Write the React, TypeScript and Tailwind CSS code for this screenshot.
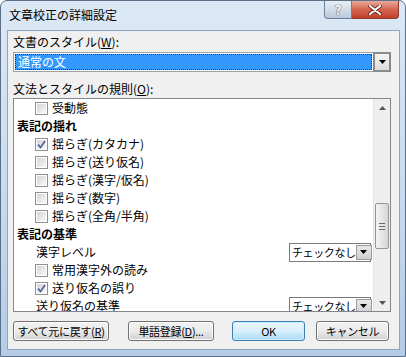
import React from "react"

type Row =
  | { kind: "check"; label: string; checked?: boolean }
  | { kind: "head"; label: string }
  | { kind: "select"; label: string; value: string }

const rows: Row[] = [
  { kind: "check", label: "受動態" },
  { kind: "head", label: "表記の揺れ" },
  { kind: "check", label: "揺らぎ(カタカナ)", checked: true },
  { kind: "check", label: "揺らぎ(送り仮名)" },
  { kind: "check", label: "揺らぎ(漢字/仮名)" },
  { kind: "check", label: "揺らぎ(数字)" },
  { kind: "check", label: "揺らぎ(全角/半角)" },
  { kind: "head", label: "表記の基準" },
  { kind: "select", label: "漢字レベル", value: "チェックなし" },
  { kind: "check", label: "常用漢字外の読み" },
  { kind: "check", label: "送り仮名の誤り", checked: true },
  { kind: "select", label: "送り仮名の基準", value: "チェックなし" },
]

function CheckBox({ checked }: { checked?: boolean }) {
  return (
    <div className="w-[13px] h-[13px] border border-[#8e8f8f] bg-white flex items-center justify-center shrink-0">
      <div className="w-[9px] h-[9px] bg-gradient-to-br from-[#d4d4d4] to-[#f8f8f8] flex items-center justify-center">
        {checked && (
          <svg width="9" height="9" viewBox="0 0 9 9">
            <path d="M1 4.5 L3.5 7.5 L8 1" fill="none" stroke="#4a5f97" strokeWidth="1.6" />
          </svg>
        )}
      </div>
    </div>
  )
}

function DropArrow() {
  return (
    <svg width="7" height="4" viewBox="0 0 7 4">
      <path d="M0 0 H7 L3.5 4 Z" fill="#000" />
    </svg>
  )
}

function Button({ children, width, primary }: { children: React.ReactNode; width: string; primary?: boolean }) {
  return (
    <div
      className={`${width} h-[20px] rounded-[3px] border flex items-center justify-center whitespace-nowrap tracking-[-0.3px] text-[11px] leading-none text-black ${
        primary
          ? "border-[#3c7fb1] bg-gradient-to-b from-[#eaf6fd] via-[#d9f0fc] to-[#a7d9f5] shadow-[inset_0_0_0_1px_#cdeefc]"
          : "border-[#707070] bg-gradient-to-b from-[#f2f2f2] via-[#ebebeb] to-[#d0d0d0] shadow-[inset_0_0_0_1px_#fcfcfc]"
      }`}
    >
      {children}
    </div>
  )
}

export default function App() {
  return (
    <div className="w-[406px] h-[357px] overflow-hidden bg-white font-['Noto_Sans_CJK_JP','Noto_Sans',sans-serif]">
      <div className="w-[406px] h-[357px] flex flex-col rounded-t-[7px] border border-[#5b6f88] bg-gradient-to-b from-[#dce8f5] via-[#c9dcf0] to-[#b4cce6]">
        {/* Title bar */}
        <div className="h-[29px] flex justify-between">
          <div className="pl-[8px] pt-[6px] text-[12px] leading-[16px] text-black">文章校正の詳細設定</div>
          <div className="flex mr-[6px]">
            <div className="w-[28px] h-[18px] rounded-bl-[4px] border border-[#6d7f99] border-t-0 bg-gradient-to-b from-[#e6edf5] via-[#d2dde9] to-[#b9c9dc] flex items-center justify-center text-[13px] font-bold leading-none text-white [text-shadow:0_0_1px_#444,0_0_1px_#444]">
              ?
            </div>
            <div className="w-[47px] h-[18px] rounded-br-[4px] border border-[#8b3a2e] border-t-0 border-l-0 bg-gradient-to-b from-[#e9a99c] via-[#d4644f] to-[#c0402b] flex items-center justify-center">
              <svg width="14" height="10" viewBox="0 0 14 10">
                <path d="M2 1 L12 9 M12 1 L2 9" stroke="#5a1d12" strokeWidth="3.6" strokeLinecap="round" />
                <path d="M2 1 L12 9 M12 1 L2 9" stroke="#fff" strokeWidth="2.2" strokeLinecap="round" />
              </svg>
            </div>
          </div>
        </div>

        {/* Client area */}
        <div className="ml-[6px] mr-[5px] h-[320px] border border-[#8fa6c2] bg-[#f0f0f0] pl-[5px] flex flex-col text-[12px] text-black whitespace-nowrap">
          <div className="mt-[3px] leading-[16px]">
            文書のスタイル(<span className="underline">W</span>):
          </div>
          <div className="mt-[2px] w-[378px] h-[20px] border border-[#a0a0a0] bg-white flex items-stretch">
            <div className="flex-1 p-[1px]">
              <div className="h-full bg-[#3399ff] border border-dotted border-[#4b3200] pl-[2px] flex items-center text-white leading-none">
                通常の文
              </div>
            </div>
            <div className="w-[18px] -my-[1px] -mr-[1px] border-2 border-[#8a8a8a] bg-gradient-to-b from-[#f4f4f4] to-[#dcdcdc] flex items-center justify-center">
              <DropArrow />
            </div>
          </div>

          <div className="mt-[9px] leading-[16px]">
            文法とスタイルの規則(<span className="underline">O</span>):
          </div>
          <div className="mt-[1px] w-[378px] h-[214px] border border-[#828790] bg-white flex">
            <div className="flex-1 overflow-hidden">
              {rows.map((r, i) => {
                if (r.kind === "head")
                  return (
                    <div key={i} className="h-[18px] pl-[3px] flex items-center font-bold leading-none">
                      {r.label}
                    </div>
                  )
                if (r.kind === "check")
                  return (
                    <div key={i} className="h-[18px] pl-[21px] flex items-center gap-[4px] leading-none">
                      <CheckBox checked={r.checked} />
                      <span>{r.label}</span>
                    </div>
                  )
                return (
                  <div key={i} className="h-[18px] pl-[22px] pr-[2px] flex items-center justify-between leading-none">
                    <span>{r.label}</span>
                    <div className="w-[82px] h-[19px] border border-[#7a7a7a] bg-white flex items-center">
                      <span className="flex-1 pl-[2px] text-[11px] tracking-[-0.4px]">{r.value}</span>
                      <div className="w-[16px] h-[15px] mr-[1px] shrink-0 bg-gradient-to-b from-[#e8e8e8] to-[#cfcfcf] border border-[#9a9a9a] flex items-center justify-center">
                        <DropArrow />
                      </div>
                    </div>
                  </div>
                )
              })}
            </div>
            {/* Scrollbar */}
            <div className="w-[17px] bg-[#eeeeee] border-l border-[#e4e4e4] flex flex-col items-center">
              <div className="h-[17px] flex items-center justify-center">
                <svg width="7" height="4" viewBox="0 0 7 4">
                  <path d="M0 4 H7 L3.5 0 Z" fill="#555" />
                </svg>
              </div>
              <div className="mt-[87px] w-[14px] h-[46px] rounded-[2px] border border-[#979797] bg-gradient-to-r from-[#f3f3f3] via-[#e6e6e6] to-[#d4d4d4] flex flex-col items-center justify-center gap-[2px]">
                <div className="w-[6px] h-[1px] bg-[#6a6a6a]" />
                <div className="w-[6px] h-[1px] bg-[#6a6a6a]" />
                <div className="w-[6px] h-[1px] bg-[#6a6a6a]" />
              </div>
              <div className="flex-1" />
              <div className="h-[17px] flex items-center justify-center">
                <svg width="7" height="4" viewBox="0 0 7 4">
                  <path d="M0 0 H7 L3.5 4 Z" fill="#555" />
                </svg>
              </div>
            </div>
          </div>

          <div className="mt-[9px] flex">
            <Button width="w-[96px]">
              すべて元に戻す(<span className="underline">R</span>)
            </Button>
            <div className="ml-[19px]">
              <Button width="w-[86px]">
                単語登録(<span className="underline">D</span>)...
              </Button>
            </div>
            <div className="ml-[18px]">
              <Button width="w-[73px]" primary>
                OK
              </Button>
            </div>
            <div className="ml-[11px]">
              <Button width="w-[73px]">キャンセル</Button>
            </div>
          </div>
        </div>
      </div>
    </div>
  )
}
